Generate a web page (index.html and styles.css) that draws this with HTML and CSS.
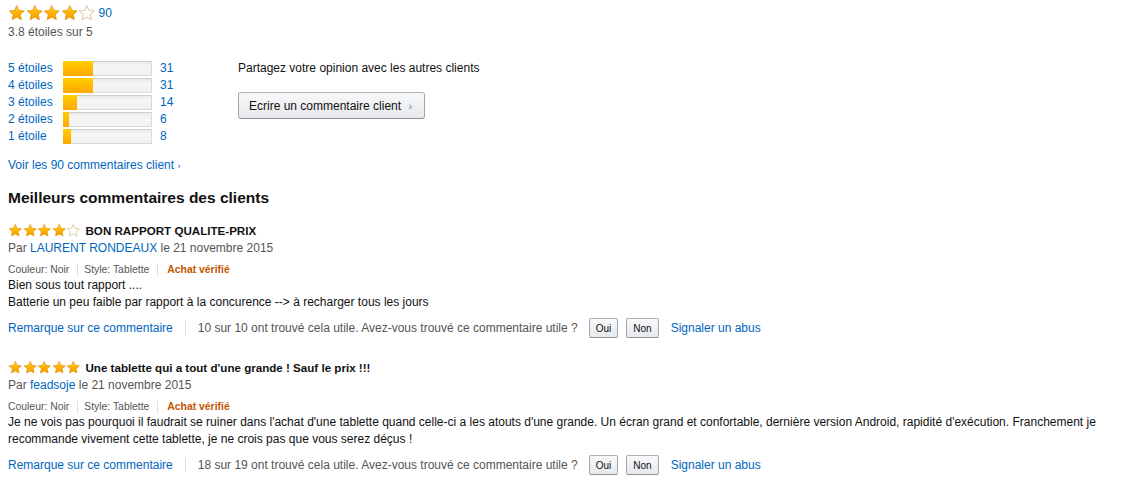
FILE: index.html
```html
<!DOCTYPE html>
<html lang="fr">
<head>
<meta charset="utf-8">
<link rel="stylesheet" href="styles.css">
</head>
<body>
<svg width="0" height="0" class="defs">
  <defs>
    <linearGradient id="gold" x1="0" y1="0" x2="0" y2="1">
      <stop offset="0" stop-color="#ffd54a"/>
      <stop offset="0.5" stop-color="#ffb400"/>
      <stop offset="1" stop-color="#f39c00"/>
    </linearGradient>
    <symbol id="star" viewBox="0 0 24 24">
      <path d="M12 1.8l3 6.6 7.2.8-5.4 4.9 1.5 7.1L12 17.6l-6.3 3.6 1.5-7.1-5.4-4.9 7.2-.8z" fill="url(#gold)" stroke="#e08e00" stroke-width="1" stroke-linejoin="round"/>
    </symbol>
    <symbol id="star-empty" viewBox="0 0 24 24">
      <path d="M12 1.8l3 6.6 7.2.8-5.4 4.9 1.5 7.1L12 17.6l-6.3 3.6 1.5-7.1-5.4-4.9 7.2-.8z" fill="#fff" stroke="#d8c49a" stroke-width="1.3" stroke-linejoin="round"/>
    </symbol>
  </defs>
</svg>

<div class="page">
  <section class="summary">
    <div class="summary-left">
      <div class="avg-row">
        <span class="stars stars-lg">
          <svg><use href="#star"/></svg><svg><use href="#star"/></svg><svg><use href="#star"/></svg><svg><use href="#star"/></svg><svg><use href="#star-empty"/></svg>
        </span>
        <a class="link total" href="#">90</a>
      </div>
      <div class="avg-text">3.8 étoiles sur 5</div>

      <table class="histo">
        <tr><td class="lbl"><a class="link" href="#">5 étoiles</a></td><td><div class="bar"><div class="fill" style="width:34%"></div></div></td><td class="cnt"><a class="link" href="#">31</a></td></tr>
        <tr><td class="lbl"><a class="link" href="#">4 étoiles</a></td><td><div class="bar"><div class="fill" style="width:34%"></div></div></td><td class="cnt"><a class="link" href="#">31</a></td></tr>
        <tr><td class="lbl"><a class="link" href="#">3 étoiles</a></td><td><div class="bar"><div class="fill" style="width:16%"></div></div></td><td class="cnt"><a class="link" href="#">14</a></td></tr>
        <tr><td class="lbl"><a class="link" href="#">2 étoiles</a></td><td><div class="bar"><div class="fill" style="width:7%"></div></div></td><td class="cnt"><a class="link" href="#">6</a></td></tr>
        <tr><td class="lbl"><a class="link" href="#">1 étoile</a></td><td><div class="bar"><div class="fill" style="width:9%"></div></div></td><td class="cnt"><a class="link" href="#">8</a></td></tr>
      </table>
    </div>
    <div class="summary-right">
      <div class="share">Partagez votre opinion avec les autres clients</div>
      <button class="btn-write">Ecrire un commentaire client <span class="chev">›</span></button>
    </div>
  </section>

  <a class="link see-all" href="#">Voir les 90 commentaires client <span class="small-chev">›</span></a>

  <h3 class="heading">Meilleurs commentaires des clients</h3>

  <div class="review">
    <div class="rv-title">
      <span class="stars stars-sm">
        <svg><use href="#star"/></svg><svg><use href="#star"/></svg><svg><use href="#star"/></svg><svg><use href="#star"/></svg><svg><use href="#star-empty"/></svg>
      </span>
      <span class="title-text">BON RAPPORT QUALITE-PRIX</span>
    </div>
    <div class="byline">Par <a class="link" href="#">LAURENT RONDEAUX</a> le 21 novembre 2015</div>
    <div class="meta"><span>Couleur: Noir</span><i class="sep"></i><span>Style: Tablette</span><i class="sep"></i><span class="verified">Achat vérifié</span></div>
    <div class="body">Bien sous tout rapport ....<br>Batterie un peu faible par rapport à la concurence --&gt; à recharger tous les jours</div>
    <div class="actions">
      <a class="link" href="#">Remarque sur ce commentaire</a>
      <i class="sep big"></i>
      <span class="helpful">10 sur 10 ont trouvé cela utile. Avez-vous trouvé ce commentaire utile ?</span>
      <button class="vote">Oui</button>
      <button class="vote">Non</button>
      <a class="link report" href="#">Signaler un abus</a>
    </div>
  </div>

  <div class="review">
    <div class="rv-title">
      <span class="stars stars-sm">
        <svg><use href="#star"/></svg><svg><use href="#star"/></svg><svg><use href="#star"/></svg><svg><use href="#star"/></svg><svg><use href="#star"/></svg>
      </span>
      <span class="title-text">Une tablette qui a tout d'une grande ! Sauf le prix !!!</span>
    </div>
    <div class="byline">Par <a class="link" href="#">feadsoje</a> le 21 novembre 2015</div>
    <div class="meta"><span>Couleur: Noir</span><i class="sep"></i><span>Style: Tablette</span><i class="sep"></i><span class="verified">Achat vérifié</span></div>
    <div class="body">Je ne vois pas pourquoi il faudrait se ruiner dans l'achat d'une tablette quand celle-ci a les atouts d'une grande. Un écran grand et confortable, dernière version Android, rapidité d'exécution. Franchement je recommande vivement cette tablette, je ne crois pas que vous serez déçus !</div>
    <div class="actions">
      <a class="link" href="#">Remarque sur ce commentaire</a>
      <i class="sep big"></i>
      <span class="helpful">18 sur 19 ont trouvé cela utile. Avez-vous trouvé ce commentaire utile ?</span>
      <button class="vote">Oui</button>
      <button class="vote">Non</button>
      <a class="link report" href="#">Signaler un abus</a>
    </div>
  </div>
</div>
</body>
</html>
```

FILE: styles.css
```css
* { box-sizing: border-box; }
html, body { margin: 0; padding: 0; background: #fff; }
body {
  font-family: "Liberation Sans", Arial, sans-serif;
  font-size: 12px;
  color: #111;
  line-height: 17px;
}
.defs { position: absolute; width: 0; height: 0; overflow: hidden; }
.page { padding: 4px 8px 0 8px; width: 1122px; }
.link { color: #0066c0; text-decoration: none; }

.summary { display: flex; }
.summary-left { width: 230px; }
.summary-right { padding-top: 56px; }

.avg-row { display: flex; align-items: center; height: 18px; }
.stars { display: inline-flex; }
.stars svg { display: block; }
.stars-lg svg { width: 17.5px; height: 18px; }
.stars-sm svg { width: 14.5px; height: 15px; }
.total { margin-left: 3px; font-size: 12px; }
.avg-text { color: #555; margin-top: 2px; }

.histo { border-collapse: collapse; margin-top: 19px; }
.histo td { padding: 0; height: 17px; vertical-align: middle; }
.histo .lbl { width: 55px; }
.histo .cnt { padding-left: 8px; }
.bar {
  width: 89px; height: 15px;
  background: linear-gradient(#e9e9e9, #f5f5f5 30%, #f1f1f1);
  border: 1px solid #d9d9d9;
  border-top-color: #cfcfcf;
}
.fill {
  background: linear-gradient(#ffce00, #ffa700);
  margin: -1px 0 0 -1px;
  height: 15px;
}

.share { color: #111; line-height: 17px; }
.btn-write {
  margin-top: 15px;
  font: 12px "Liberation Sans", Arial, sans-serif;
  color: #111;
  height: 27px;
  padding: 0 10px;
  width: 187px;
  text-align: left;
  border: 1px solid #adb1b8;
  border-color: #adb1b8 #a2a6ac #8d9096;
  border-radius: 3px;
  background: linear-gradient(#f7f8fa, #e7e9ec);
}
.chev { color: #777; margin-left: 4px; font-size: 11px; }

.see-all { display: inline-block; margin-top: 12px; }
.small-chev { font-size: 9px; }

.heading {
  margin: 13px 0 0 0;
  font-size: 15.5px;
  font-weight: bold;
  line-height: 20px;
}

.review { margin-top: 14px; }
.review + .review { margin-top: 21px; }
.rv-title { display: flex; align-items: center; height: 16px; }
.title-text { font-weight: bold; margin-left: 5px; font-size: 11.6px; }
.byline { color: #555; margin-top: 2px; }
.meta {
  font-size: 10.4px;
  color: #555;
  display: flex;
  align-items: center;
  margin-top: 6px;
  line-height: 14px;
}
.sep { display: inline-block; width: 1px; height: 12px; background: #ddd; margin: 0 6px 0 8px; }
.meta .sep + .verified { margin-left: 3px; }
.sep.big { height: 14px; margin: 0 12px 0 12px; }
.verified { color: #c45500; font-weight: bold; margin-left: 4px; }
.body { margin-top: 0; width: 1110px; }
.actions { display: flex; align-items: center; margin-top: 7px; height: 20px; }
.helpful { color: #555; }
.vote {
  font: 10px "Liberation Sans", Arial, sans-serif;
  color: #111;
  height: 20px;
  padding: 0 6px;
  margin-left: 8px;
  border: 1px solid #adb1b8;
  border-color: #adb1b8 #a2a6ac #8d9096;
  border-radius: 2px;
  background: linear-gradient(#f7f8fa, #e7e9ec);
}
.vote:first-of-type { margin-left: 11px; }
.report { margin-left: 12px; }
```
